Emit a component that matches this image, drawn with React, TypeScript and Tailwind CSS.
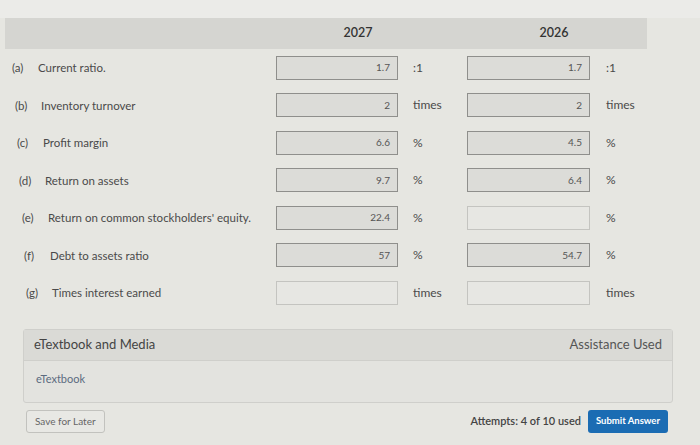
const rows = [
  { key: "(a)", label: "Current ratio.", pad: "pl-[12px]", v1: "1.7", v2: "1.7", unit: ":1", filled: [true, true] },
  { key: "(b)", label: "Inventory turnover", pad: "pl-[15px]", v1: "2", v2: "2", unit: "times", filled: [true, true] },
  { key: "(c)", label: "Profit margin", pad: "pl-[17px]", v1: "6.6", v2: "4.5", unit: "%", filled: [true, true] },
  { key: "(d)", label: "Return on assets", pad: "pl-[19px]", v1: "9.7", v2: "6.4", unit: "%", filled: [true, true] },
  { key: "(e)", label: "Return on common stockholders' equity.", pad: "pl-[22px]", v1: "22.4", v2: "", unit: "%", filled: [true, false] },
  { key: "(f)", label: "Debt to assets ratio", pad: "pl-[24px]", v1: "57", v2: "54.7", unit: "%", filled: [true, true] },
  { key: "(g)", label: "Times interest earned", pad: "pl-[26px]", v1: "", v2: "", unit: "times", filled: [false, false] },
];

const Box = ({ value, filled }: { value: string; filled: boolean }) => (
  <div
    className={
      filled
        ? "h-[24px] border border-[#8f8f8c] bg-[#dcdcd8] flex items-center justify-end pr-[7px] text-[10px] text-[#555]"
        : "h-[24px] border border-[#c4c4c0] bg-[#e7e7e3] flex items-center justify-end pr-[7px] text-[10px] text-[#555]"
    }
  >
    {value}
  </div>
);

export default function App() {
  return (
    <div
      className="w-[700px] h-[445px] overflow-hidden bg-[#e6e6e1] text-[#4a4a4a]"
      style={{ fontFamily: "Lato, 'Open Sans', sans-serif" }}
    >
      <div className="h-[18px] bg-[#ebebe8]" />
      {/* year header */}
      <div className="ml-[5px] w-[642px] h-[31px] bg-[#d5d5d1] flex items-center text-[12.5px] font-semibold text-[#333]">
        <div className="w-[271px]" />
        <div className="w-[164px] text-center">2027</div>
        <div className="w-[27px]" />
        <div className="w-[174px] text-center">2026</div>
      </div>

      <div>
        {rows.map((r) => (
          <div key={r.key} className="h-[37.5px] grid grid-cols-[276px_122px_69px_123px_1fr] items-center text-[11.5px]">
            <div className={"flex " + r.pad}>
              <span className="w-[26px]">{r.key}</span>
              <span>{r.label}</span>
            </div>
            <Box value={r.v1} filled={r.filled[0]} />
            <div className="pl-[15px] text-[12px]">{r.unit}</div>
            <Box value={r.v2} filled={r.filled[1]} />
            <div className="pl-[16px] text-[12px]">{r.unit}</div>
          </div>
        ))}
      </div>

      {/* eTextbook panel */}
      <div className="ml-[23px] mt-[17px] w-[650px] border border-[#cfcfcb] rounded-[3px] bg-[#e3e3df]">
        <div className="h-[31px] bg-[#dadad6] border-b border-[#cfcfcb] flex items-center justify-between px-[10px] text-[13px] text-[#444]">
          <span>eTextbook and Media</span>
          <span className="text-[#555]">Assistance Used</span>
        </div>
        <div className="h-[41px] pl-[12px] pt-[10px] text-[11px] text-[#5b6b80]">eTextbook</div>
      </div>

      <div className="ml-[26px] mr-[32px] mt-[7px] flex items-center justify-between">
        <div className="h-[23px] px-[8px] border border-[#c2c2be] rounded-[3px] bg-[#e8e8e4] flex items-center text-[10px] text-[#666]">
          Save for Later
        </div>
        <div className="flex items-center gap-[7px]">
          <span className="text-[11px] font-semibold text-[#444]">Attempts: 4 of 10 used</span>
          <div className="h-[23px] px-[8px] rounded-[3px] bg-[#1b6cb3] flex items-center text-[9.5px] font-bold text-white">
            Submit Answer
          </div>
        </div>
      </div>
    </div>
  );
}
